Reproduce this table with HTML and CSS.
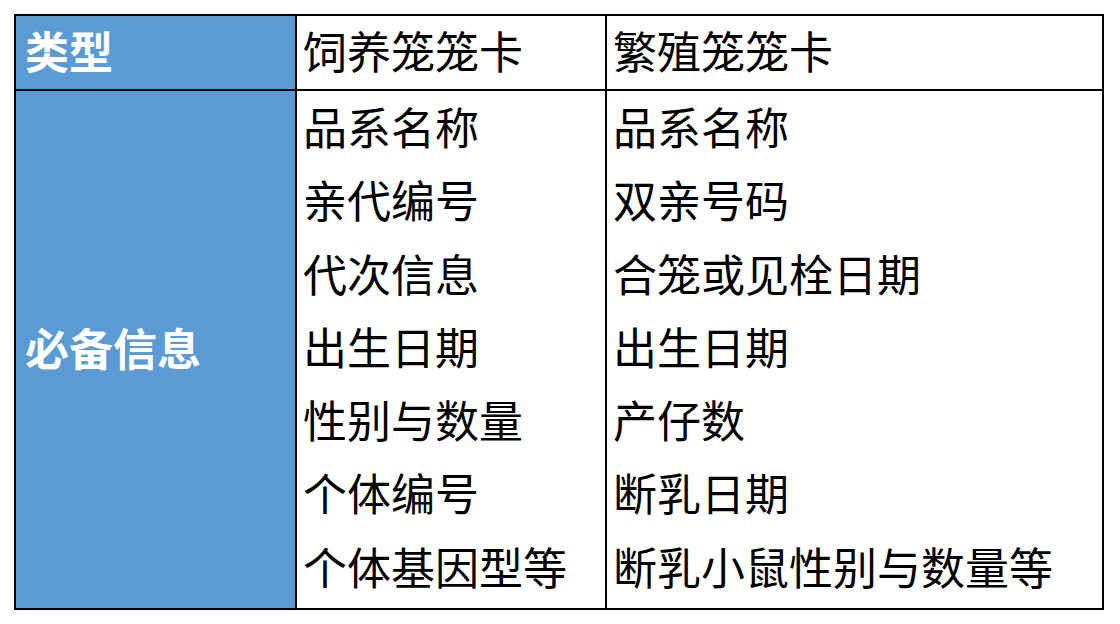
FILE: index.html
```html
<!DOCTYPE html>
<html lang="zh-CN">
<head>
<meta charset="utf-8">
<title>笼卡类型</title>
<link rel="stylesheet" href="styles.css">
</head>
<body>
<div class="table">
  <div class="cell head">类型</div>
  <div class="cell">饲养笼笼卡</div>
  <div class="cell">繁殖笼笼卡</div>
  <div class="cell head">必备信息</div>
  <div class="cell list">
    <div>品系名称</div>
    <div>亲代编号</div>
    <div>代次信息</div>
    <div>出生日期</div>
    <div>性别与数量</div>
    <div>个体编号</div>
    <div>个体基因型等</div>
  </div>
  <div class="cell list">
    <div>品系名称</div>
    <div>双亲号码</div>
    <div>合笼或见栓日期</div>
    <div>出生日期</div>
    <div>产仔数</div>
    <div>断乳日期</div>
    <div>断乳小鼠性别与数量等</div>
  </div>
</div>
</body>
</html>
```
FILE: styles.css
```css
html, body {
  margin: 0;
  padding: 0;
  background: #ffffff;
}
body {
  padding: 14px;
  font-family: "Noto Sans CJK SC", "Noto Sans", sans-serif;
  color: #000000;
}
.table {
  display: grid;
  grid-template-columns: 279px 308px 495px;
  grid-template-rows: 73px 517px;
  gap: 2px;
  width: 1086px;
  border: 2px solid #000000;
  background: #000000;
}
.cell {
  background: #ffffff;
  display: flex;
  align-items: center;
  padding-left: 6px;
  padding-bottom: 6px;
  font-size: 44px;
  line-height: 1;
  white-space: nowrap;
}
.cell.head {
  background: #5b9bd5;
  color: #ffffff;
  font-weight: bold;
  padding-left: 9px;
}
.cell.list {
  flex-direction: column;
  align-items: flex-start;
  justify-content: center;
  line-height: 73.3px;
}
```
